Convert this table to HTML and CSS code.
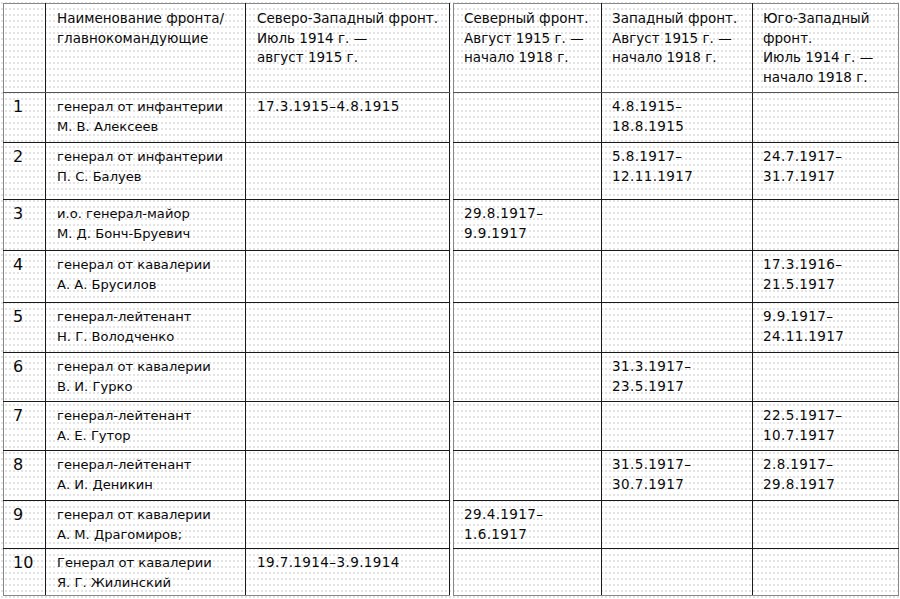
FILE: index.html
```html
<!DOCTYPE html>
<html lang="ru">
<head>
<meta charset="utf-8">
<title>Главнокомандующие фронтами</title>
<link rel="stylesheet" href="styles.css">
</head>
<body>
<div class="page">
  <table class="tbl tbl-left">
    <colgroup><col class="c-num"><col class="c-name"><col class="c-nw"></colgroup>
    <tr class="h-head"><td></td><td>Наименование фронта/<br>главнокомандующие</td><td>Северо-Западный фронт.<br>Июль 1914 г. —<br>август 1915 г.</td></tr>
    <tr class="h1"><td class="num">1</td><td class="name">генерал от инфантерии<br>М. В. Алексеев</td><td class="date">17.3.1915–4.8.1915</td></tr>
    <tr class="h2"><td class="num">2</td><td class="name">генерал от инфантерии<br>П. С. Балуев</td><td></td></tr>
    <tr class="h3"><td class="num">3</td><td class="name">и.о. генерал-майор<br>М. Д. Бонч-Бруевич</td><td></td></tr>
    <tr class="h4"><td class="num">4</td><td class="name">генерал от кавалерии<br>А. А. Брусилов</td><td></td></tr>
    <tr class="h5"><td class="num">5</td><td class="name">генерал-лейтенант<br>Н. Г. Володченко</td><td></td></tr>
    <tr class="h6"><td class="num">6</td><td class="name">генерал от кавалерии<br>В. И. Гурко</td><td></td></tr>
    <tr class="h7"><td class="num">7</td><td class="name">генерал-лейтенант<br>А. Е. Гутор</td><td></td></tr>
    <tr class="h8"><td class="num">8</td><td class="name">генерал-лейтенант<br>А. И. Деникин</td><td></td></tr>
    <tr class="h9"><td class="num">9</td><td class="name">генерал от кавалерии<br>А. М. Драгомиров;</td><td></td></tr>
    <tr class="h10"><td class="num">10</td><td class="name">Генерал от кавалерии<br>Я. Г. Жилинский</td><td class="date">19.7.1914–3.9.1914</td></tr>
  </table>
  <table class="tbl tbl-right">
    <colgroup><col class="c-n"><col class="c-w"><col class="c-sw"></colgroup>
    <tr class="h-head"><td>Северный фронт.<br>Август 1915 г. —<br>начало 1918 г.</td><td>Западный фронт.<br>Август 1915 г. —<br>начало 1918 г.</td><td>Юго-Западный<br>фронт.<br>Июль 1914 г. —<br>начало 1918 г.</td></tr>
    <tr class="h1"><td></td><td class="date">4.8.1915–<br>18.8.1915</td><td></td></tr>
    <tr class="h2"><td></td><td class="date">5.8.1917–<br>12.11.1917</td><td class="date">24.7.1917–<br>31.7.1917</td></tr>
    <tr class="h3"><td class="date">29.8.1917–<br>9.9.1917</td><td></td><td></td></tr>
    <tr class="h4"><td></td><td></td><td class="date">17.3.1916–<br>21.5.1917</td></tr>
    <tr class="h5"><td></td><td></td><td class="date">9.9.1917–<br>24.11.1917</td></tr>
    <tr class="h6"><td></td><td class="date">31.3.1917–<br>23.5.1917</td><td></td></tr>
    <tr class="h7"><td></td><td></td><td class="date">22.5.1917–<br>10.7.1917</td></tr>
    <tr class="h8"><td></td><td class="date">31.5.1917–<br>30.7.1917</td><td class="date">2.8.1917–<br>29.8.1917</td></tr>
    <tr class="h9"><td class="date">29.4.1917–<br>1.6.1917</td><td></td><td></td></tr>
    <tr class="h10"><td></td><td></td><td></td></tr>
  </table>
</div>
</body>
</html>
```
FILE: styles.css
```css
html, body {
  margin: 0;
  padding: 0;
  background: #ffffff;
}
body {
  width: 900px;
  height: 599px;
  overflow: hidden;
  font-family: "DejaVu Sans", "Liberation Sans", sans-serif;
  font-size: 13.5px;
  color: #0a0a0a;
}
.page {
  display: flex;
  align-items: flex-start;
  gap: 3px;
  padding: 3px 0 0 3px;
  background-image: radial-gradient(circle, #d4d4d4 0.6px, transparent 0.9px);
  background-size: 4px 6px;
  height: 596px;
}
.tbl {
  border-collapse: collapse;
  table-layout: fixed;
  border: 1px solid #888;
}
.tbl-left { width: 446px; }
.tbl-right { width: 445px; }
.c-num { width: 42px; }
.c-name { width: 200px; }
.c-nw { width: 204px; }
.c-n { width: 148px; }
.c-w { width: 151px; }
.c-sw { width: 146px; }
.tbl td {
  border: 1px solid #1a1a1a;
  vertical-align: top;
  padding: 4px 4px 0 11px;
  line-height: 19.5px;
  background: transparent;
  white-space: nowrap;
}
.tbl-left td:first-child { padding-left: 9px; }
.tbl-right td { padding-left: 10px; }
.tbl tr:first-child td { border-top-color: #888; }
.tbl td:first-child { border-left-color: #888; }
.tbl-right td:last-child { border-right-color: #888; }
.tbl tr:last-child td { border-bottom-color: #888; }
.h-head td { border-bottom-color: #555; padding-top: 5px; }
.h9 td { border-top-color: #666; }
.num { font-size: 16px; }
.name { font-size: 13.1px; }
.date { letter-spacing: 0.4px; }
.h-head { height: 89px; }
.h1 { height: 50px; }
.h2 { height: 57px; }
.h3 { height: 51px; }
.h4 { height: 52px; }
.h5 { height: 50px; }
.h6 { height: 49px; }
.h7 { height: 49px; }
.h8 { height: 50px; }
.h9 { height: 48px; }
.h10 { height: 47px; }
```
